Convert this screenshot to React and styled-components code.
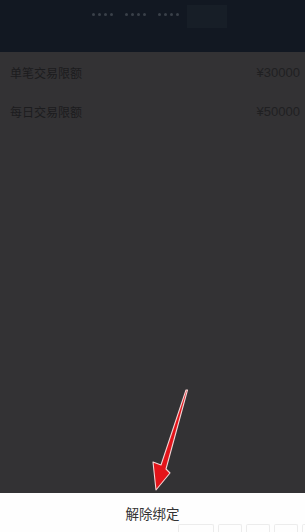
import React from 'react';
import styled, { createGlobalStyle } from 'styled-components';

const Global = createGlobalStyle`
  html, body { margin: 0; padding: 0; background: #333234; }
  body { font-family: "Noto Sans CJK SC", "Noto Sans", sans-serif; }
`;

const Screen = styled.div`
  width: 305px;
  height: 532px;
  display: flex;
  flex-direction: column;
  position: relative;
  overflow: hidden;
  background: #333234;
`;

const Header = styled.div`
  height: 52px;
  background: #121822;
  display: flex;
  align-items: flex-start;
  padding: 5px 0 0 92px;
  box-sizing: border-box;
  gap: 10px;
`;

const Dots = styled.div`
  display: flex;
  gap: 12px;
  padding-top: 8px;
`;

const DotGroup = styled.span`
  display: flex;
  gap: 3px;
  span {
    width: 3px;
    height: 3px;
    border-radius: 50%;
    background: #3a4049;
  }
`;

const CardTail = styled.div`
  width: 40px;
  height: 23px;
  background: #171e27;
  margin-left: -2px;
`;

const Overlay = styled.div`
  flex: 1;
  display: flex;
  flex-direction: column;
  padding-top: 1px;
`;

const Row = styled.div`
  display: flex;
  justify-content: space-between;
  align-items: center;
  height: 39px;
  padding: 0 5px 0 10px;
  font-size: 12px;
  color: #1c1c1e;
`;

const Amount = styled.span`
  font-family: "Liberation Sans", sans-serif;
  font-size: 13px;
  color: #202022;
`;

const Footer = styled.div`
  height: 39px;
  background: #fefefe;
  display: flex;
  justify-content: center;
  padding-top: 10px;
  box-sizing: border-box;
  font-size: 13.5px;
  color: #333;
  position: relative;
`;

const Watermark = styled.div`
  position: absolute;
  left: 178px;
  bottom: -3px;
  display: flex;
  gap: 4px;
  span {
    width: 22px;
    height: 10px;
    border: 1px solid #ececec;
    border-bottom: none;
    border-radius: 2px 2px 0 0;
  }
`;

const Arrow = styled.svg`
  position: absolute;
  left: 145px;
  top: 385px;
`;

const group = () => (
  <DotGroup>
    <span /><span /><span /><span />
  </DotGroup>
);

export default function App() {
  return (
    <Screen>
      <Global />
      <Header>
        <Dots>
          {group()}
          {group()}
          {group()}
        </Dots>
        <CardTail />
      </Header>
      <Overlay>
        <Row>
          <span>单笔交易限额</span>
          <Amount>¥30000</Amount>
        </Row>
        <Row>
          <span>每日交易限额</span>
          <Amount>¥50000</Amount>
        </Row>
      </Overlay>
      <Footer>
        解除绑定
        <Watermark>
          <span style={{ width: 34 }} /><span /><span /><span /><span />
        </Watermark>
      </Footer>
      <Arrow width="50" height="110" viewBox="0 0 50 110">
        <path
          d="M42.5 5 L41 5 L16 80 L8 77 L11 105 L25 88 L21 84 Z"
          fill="#e3141a"
          stroke="#f2d4d4"
          strokeWidth="1.1"
          strokeLinejoin="round"
        />
      </Arrow>
    </Screen>
  );
}
